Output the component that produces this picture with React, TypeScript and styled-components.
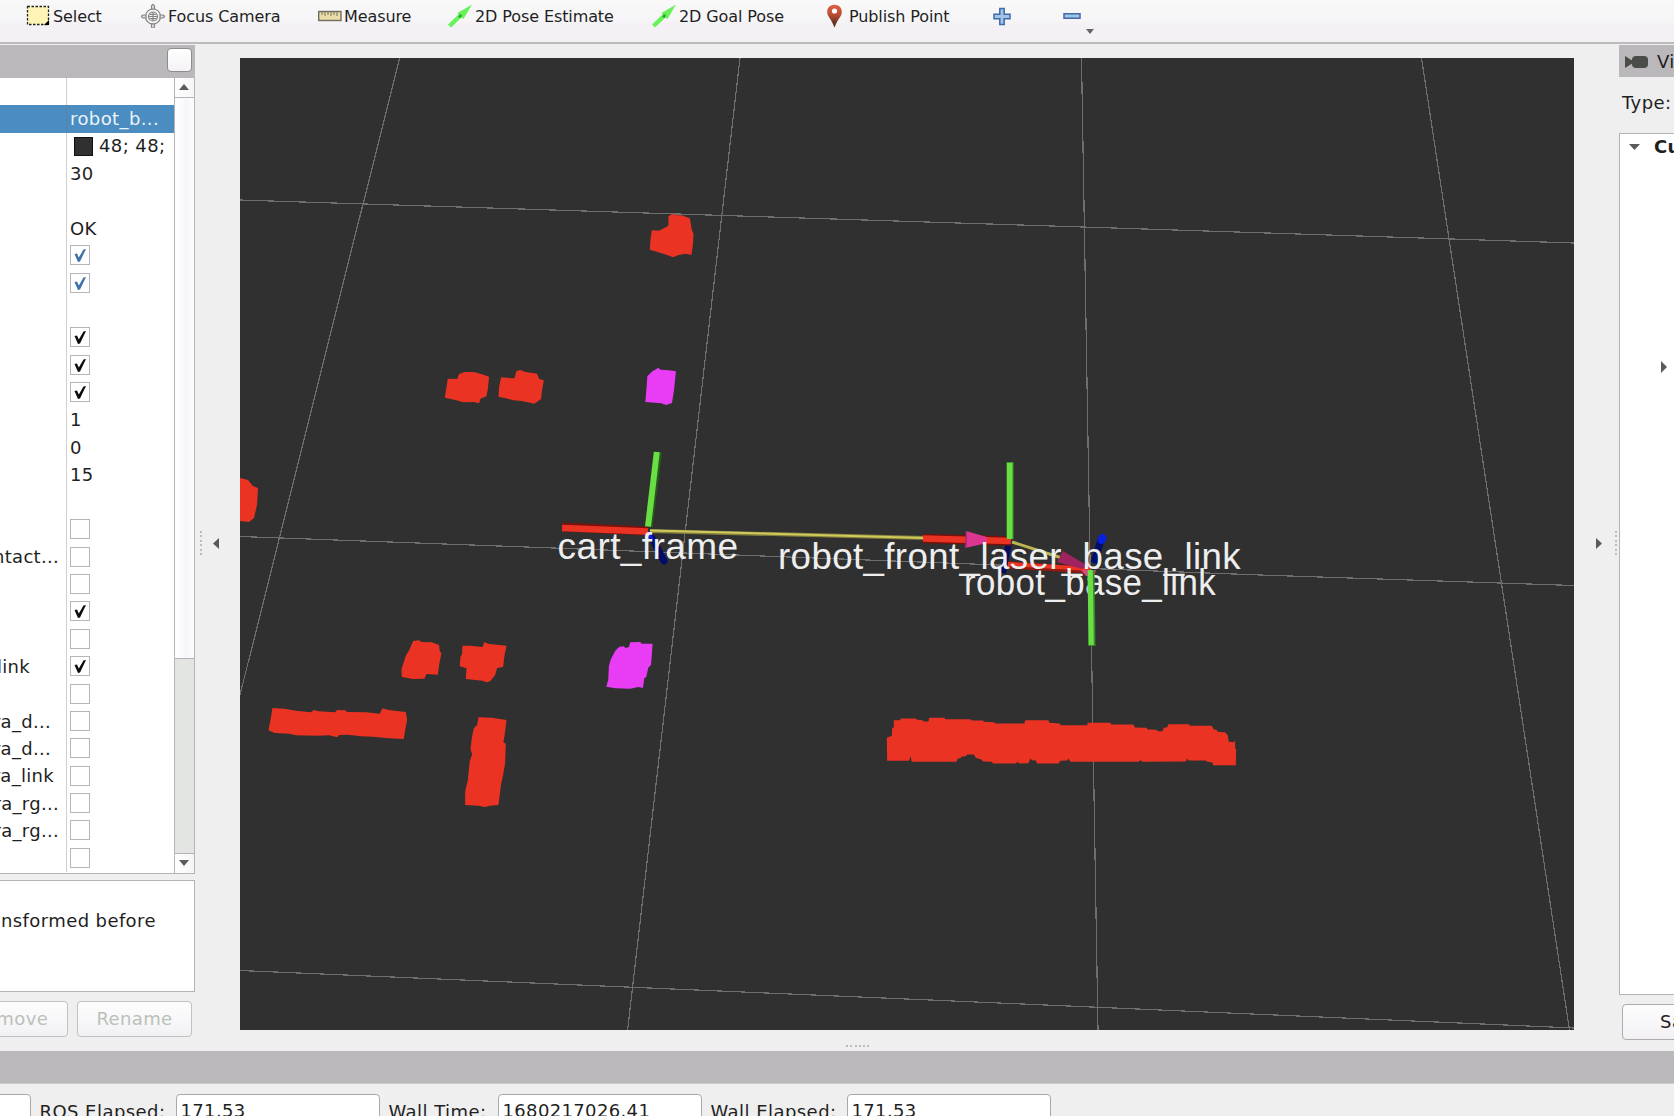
import React from "react";
import styled, { createGlobalStyle, css } from "styled-components";

const GlobalStyle = createGlobalStyle`
  * { box-sizing: border-box; }
  html, body { margin: 0; padding: 0; overflow: hidden; }
  body { background: #efefef; }
`;

const Window = styled.div`
  width: 1674px;
  height: 1116px;
  overflow: hidden;
  display: flex;
  flex-direction: column;
  background: #efefef;
  color: #1f1f1f;
  font-family: "DejaVu Sans", sans-serif;
  font-size: 18px;
  line-height: 22px;
  letter-spacing: 0.4px;
  white-space: nowrap;
`;

/* ---------- toolbar ---------- */

const Toolbar = styled.div`
  height: 44px;
  flex: none;
  display: flex;
  align-items: flex-start;
  background: linear-gradient(#f9f9f9, #f6f5f7 45%, #f3f1f4 60%, #f3f1f4);
  border-bottom: 2px solid #bcbabc;
  font-size: 16px;
  letter-spacing: -0.1px;
`;

const Tool = styled.div<{ $gap: number; $width: number }>`
  margin-left: ${(p) => p.$gap}px;
  width: ${(p) => p.$width}px;
  height: 32px;
  flex: none;
  display: flex;
  align-items: center;
`;

const ToolText = styled.span`
  padding-top: 2px;
`;

const ToolIcon = styled.svg<{ $space?: number }>`
  width: 24px;
  height: 24px;
  flex: none;
  margin-right: ${(p) => p.$space ?? 3}px;
`;

const MenuCaret = styled.svg`
  width: 8px;
  height: 5px;
  margin: 29px 0 0 4px;
`;

function PoseArrow() {
  return (
    <ToolIcon viewBox="0 0 24 24">
      <path d="M0 20.500 10.500 10.500 9.500 9 24 .5 15.500 15 13.500 13.500 3 23.500Z" fill="#67f258" />
      <path d="m10 13 2-3 2 1-1 3z" fill="#33a334" />
    </ToolIcon>
  );
}

/* ---------- docks ---------- */

const Main = styled.div`
  height: 1007px;
  flex: none;
  display: flex;
`;

const LeftDock = styled.div`
  width: 195px;
  flex: none;
  padding-top: 1px;
  display: flex;
  flex-direction: column;
`;

const DockTitle = styled.div<{ $right?: boolean }>`
  height: ${(p) => (p.$right ? 32 : 33)}px;
  flex: none;
  display: flex;
  align-items: center;
  justify-content: ${(p) => (p.$right ? "flex-start" : "flex-end")};
  padding: ${(p) => (p.$right ? "2px 0 0 6px" : "0 3px 3px 0")};
  background: #bbb8bb;
`;

const CameraIcon = styled.svg`
  width: 23px;
  height: 12px;
  flex: none;
  margin-right: 9px;
`;

const FloatButton = styled.div`
  width: 25px;
  height: 24px;
  border: 1px solid #8e8c8e;
  border-radius: 4px;
  background: linear-gradient(#fff, #f4f2f5);
`;

const Tree = styled.div`
  height: 796px;
  flex: none;
  display: flex;
  background: #fff;
  border-right: 1px solid #b5b3b5;
  border-bottom: 1px solid #b5b3b5;
`;

const Rows = styled.div`
  width: 174px;
  flex: none;
`;

const Row = styled.div<{ $selected?: boolean }>`
  height: 27.4px;
  display: flex;
  ${(p) =>
    p.$selected &&
    css`
      background: #4b8dc1;
      color: #eaf3fa;
    `}
`;

const NameCell = styled.div<{ $end: number }>`
  width: 67px;
  flex: none;
  display: flex;
  align-items: center;
  justify-content: flex-end;
  padding-right: ${(p) => p.$end}px;
  overflow: hidden;
  letter-spacing: 0.3px;
  border-right: 1px solid rgba(120, 116, 120, 0.34);
`;

const ValueCell = styled.div`
  flex: 1;
  display: flex;
  align-items: center;
  padding-left: 3px;
`;

const Swatch = styled.span`
  width: 19px;
  height: 19px;
  margin: 0 6px 0 4px;
  background: #303030;
  border: 1px solid #111;
`;

const Check = styled.span`
  width: 20px;
  height: 20px;
  margin-top: -1.5px;
  background: #fff;
  border: 1px solid #b7b5b7;
  display: flex;
`;

const ScrollBar = styled.div`
  width: 20px;
  flex: none;
  display: flex;
  flex-direction: column;
  border-left: 1px solid #b5b3b5;
  background: #e3e5e3;
`;

const ScrollStep = styled.div<{ $down?: boolean }>`
  height: 20px;
  display: flex;
  align-items: center;
  justify-content: center;
  padding: 0 1px 2px 0;
  background: linear-gradient(90deg, #fff, #f6f4f7);
  border-${(p) => (p.$down ? "top" : "bottom")}: 1px solid #b5b3b5;
`;

const Thumb = styled.div`
  height: 561px;
  margin-bottom: auto;
  background: linear-gradient(90deg, #fff, #f7f5f9 60%, #fdfdfd);
  border-bottom: 1px solid #b5b3b5;
`;

const Arrow = styled.svg<{ $w: number; $h: number }>`
  width: ${(p) => p.$w}px;
  height: ${(p) => p.$h}px;
  flex: none;
  fill: #5a5b58;
`;

const Help = styled.div`
  height: 112px;
  margin-top: 6px;
  flex: none;
  padding-top: 29px;
  padding-left: 1px;
  background: #fff;
  border: 1px solid #b5b3b5;
  border-left: 0;
`;

const Buttons = styled.div`
  display: flex;
  gap: 9px;
  margin: 9px 0 0 -47px;
`;

const Button = styled.div<{ $off?: boolean }>`
  width: 115px;
  height: 36px;
  flex: none;
  display: flex;
  align-items: center;
  justify-content: center;
  border: 1px solid ${(p) => (p.$off ? "#c2c0c2" : "#adabad")};
  border-radius: 4px;
  background: linear-gradient(#fdfdfd, #f8f7f9 50%, #f2f0f3);
  color: ${(p) => (p.$off ? "#b9c2b8" : "#1f1f1f")};
`;

const Splitter = styled.div<{ $right?: boolean }>`
  width: 45px;
  flex: none;
  height: 998px;
  display: flex;
  align-items: center;
  gap: ${(p) => (p.$right ? 13 : 11)}px;
  padding-left: ${(p) => (p.$right ? 22 : 5)}px;
`;

const Dots = styled.div<{ $flat?: boolean }>`
  display: flex;
  flex-direction: ${(p) => (p.$flat ? "row" : "column")};
  gap: ${(p) => (p.$flat ? 2.3 : 2.5)}px;
`;

const Dot = styled.i`
  width: 2px;
  height: 2px;
  background: #bcbcbc;
`;

const Center = styled.div`
  width: 1334px;
  flex: none;
  padding-top: 14px;
`;

const Scene = styled.svg`
  display: block;
  width: 1334px;
  height: 972px;
  background: #303030;
`;

const BottomHandle = styled.div`
  display: flex;
  padding: 15px 0 0 606px;
`;

const RightDock = styled.div`
  width: 55px;
  flex: none;
  overflow: hidden;
  padding-top: 1px;
`;

const TypeLine = styled.div`
  height: 56px;
  padding: 15px 0 0 3px;
`;

const ViewTree = styled.div`
  width: 300px;
  height: 862px;
  padding-left: 9px;
  background: #fff;
  border: 1px solid #b5b3b5;
`;

const ViewRow = styled.div`
  display: flex;
  align-items: center;
  gap: 14px;
  height: 25px;
  font-weight: bold;
`;

const ChildRow = styled.div`
  padding: 202px 0 0 32px;
  display: flex;
`;

const SaveButton = styled(Button)`
  width: 122px;
  margin: 9px 0 0 3px;
`;

/* ---------- time panel ---------- */

const TimeTitle = styled.div`
  height: 33px;
  flex: none;
  background: #bbb8bb;
  border-bottom: 1px solid #cfcdcf;
`;

const TimeRow = styled.div`
  display: flex;
  padding-top: 10px;
  margin-left: -173.5px;
`;

const Field = styled.div`
  width: 204px;
  height: 36px;
  flex: none;
  padding: 5px 0 0 4px;
  background: #fff;
  border: 1px solid #aaa8aa;
  border-radius: 4px;
  letter-spacing: 0.35px;
`;

const FieldLabel = styled.div<{ $width: number }>`
  width: ${(p) => p.$width}px;
  flex: none;
  padding: 7px 0 0 9px;
  letter-spacing: 0.45px;
`;

type Item = {
  name?: string;
  end?: number;
  text?: string;
  swatch?: boolean;
  box?: "off" | "on" | "blue";
  selected?: boolean;
};

const items: Item[] = [
  {},
  { text: "robot_b...", selected: true },
  { text: "48; 48;", swatch: true },
  { text: "30" },
  {},
  { text: "OK" },
  { box: "blue" },
  { box: "blue" },
  {},
  { box: "on" },
  { box: "on" },
  { box: "on" },
  { text: "1" },
  { text: "0" },
  { text: "15" },
  {},
  { box: "off" },
  { box: "off", name: "ntact...", end: 7 },
  { box: "off" },
  { box: "on" },
  { box: "off" },
  { box: "on", name: "link", end: 36 },
  { box: "off" },
  { box: "off", name: "ra_d...", end: 15 },
  { box: "off", name: "ra_d...", end: 15 },
  { box: "off", name: "ra_link", end: 12 },
  { box: "off", name: "ra_rg...", end: 7 },
  { box: "off", name: "ra_rg...", end: 7 },
  { box: "off" },
];

function CheckBox({ state }: { state: "off" | "on" | "blue" }) {
  return (
    <Check>
      {state !== "off" && (
        <svg width="18" height="18" viewBox="0 0 18 18">
          <path
            d="M3.500 8 6 7.500 7.800 11.500 12.500 3.500 15 3 9 15.500 7 16Z"
            fill={state === "blue" ? "#3d72a8" : "#0c0c0c"}
          />
        </svg>
      )}
    </Check>
  );
}

function Grip({ flat }: { flat?: boolean }) {
  return (
    <Dots $flat={flat}>
      {[0, 1, 2, 3, 4, 5].map((i) => (
        <Dot key={i} />
      ))}
    </Dots>
  );
}

function SceneView() {
  return (
    <Scene viewBox="240 58 1334 972">
      <g fill="none" stroke="#6e6e6e" strokeWidth="1.200" shapeRendering="crispEdges">
        <path d="M399.600 58 240 695M740 58 627.600 1030M1081.500 58 1098 1030M1421.500 58 1569.500 1030" />
        <path d="M240 200 1083 227 1574 243M240 536.500 540 547.500 1260 575 1574 585.500M240 970.500 930 1000 1574 1028" />
      </g>
      <g fill="#ea3323">
        <path d="M240 478 248 480 253 486 258 488 257 505 254 518 249 522 240 521Z" />
        <g transform="translate(429.800 199.700) scale(.33333)">
          <path d="M716 50 728 42 738 47 756 47 780 56 786 90 791 102 790 130 785 166 766 162 744 167 730 173 714 167 686 158 660 150 662 120 666 92 688 93 716 78Z" />
          <path d="M54 537 82 538 88 523 104 517 132 517 154 523 178 531 174 568 170 590 152 597 148 611 132 607 100 608 80 602 45 594 50 562Z" />
          <path d="M214 533 254 536 260 514 272 511 284 516 322 522 328 538 342 542 336 576 334 598 314 612 276 604 250 602 234 597 206 591 208 562Z" />
        </g>
        <g transform="translate(229.800 599.700) scale(.33333)">
          <path d="M550 124 568 122 575 127 606 128 628 136 630 155 635 160 628 196 624 225 590 223 584 237 550 238 516 232 515 208 523 185 528 168 538 152Z" />
          <path d="M698 138 722 138 758 142 764 127 774 132 830 138 824 168 820 202 802 205 796 226 782 244 770 248 758 243 708 238 710 206 690 200 692 172 697 162Z" />
          <path d="M128 325 165 327 198 333 244 338 252 331 266 335 316 338 322 331 346 332 352 337 410 338 450 342 458 326 476 331 528 337 532 360 526 392 522 418 476 416 430 411 394 410 354 405 328 406 322 413 298 407 264 408 198 407 178 402 134 400 116 392 122 362Z" />
          <path d="M746 353 786 354 830 361 826 396 821 428 828 432 826 490 820 526 814 552 806 616 780 618 766 622 746 618 706 616 706 576 714 542 720 484 727 464 722 448 726 416 732 386 742 376Z" />
        </g>
        <path
          transform="translate(869.800 689.800) scale(.33333)"
          d="M72 91 90 91 94 86 138 86 142 90 158 91 162 95 176 95 178 84 224 84 226 88 302 88 306 92 340 92 342 96 374 97 376 101 464 101 466 91 536 91 538 99 570 101 572 106 652 106 654 99 722 99 724 104 790 104 796 113 830 114 834 119 860 120 864 124 878 124 882 114 892 112 896 103 958 103 960 108 1026 108 1032 119 1040 120 1044 126 1066 127 1074 136 1077 156 1092 157 1096 151 1096 176 1099 178 1098 226 1030 226 1028 218 1012 216 1008 212 956 212 952 206 948 215 818 216 812 211 806 216 602 216 596 206 592 212 572 213 566 221 502 221 498 212 486 211 482 205 476 220 448 221 444 216 438 221 370 221 366 216 340 215 336 210 318 204 312 194 292 194 288 199 276 200 272 205 264 206 260 216 126 216 122 199 118 213 52 213 51 144 66 138 67 115 72 112Z"
        />
      </g>
      <g fill="#e83df4">
        <path
          transform="translate(430 199.700) scale(.33333)"
          d="M668 514 678 509 684 504 692 510 716 512 738 515 732 572 726 610 708 616 694 611 646 607 650 560 652 530Z"
        />
        <path
          transform="translate(229.600 599.700) scale(.33333)"
          d="M1158 152 1170 141 1182 140 1188 145 1198 142 1202 128 1232 127 1236 132 1269 132 1266 175 1264 196 1256 204 1250 232 1244 236 1240 265 1226 262 1202 267 1158 266 1130 261 1136 240 1138 198 1144 178Z"
        />
      </g>
      <g strokeLinecap="butt" fill="none">
        <path d="M652 538 664 561" stroke="#000c69" strokeWidth="7" strokeLinecap="round" />
        <path d="M648 532 652 540" stroke="#0720dc" strokeWidth="4" />
        <path d="M562 527 648 531" stroke="#7b130c" strokeWidth="9" />
        <path d="M562 528 648 531.500" stroke="#ea3323" strokeWidth="6.500" />
        <path d="M650 531 925 538" stroke="#85813d" strokeWidth="4" />
        <path d="M650 530.500 925 538" stroke="#d0c95b" strokeWidth="2" />
        <path d="M649 527 658.500 452" stroke="#245d18" strokeWidth="7" />
        <path d="M648 526.500 656.800 452" stroke="#68df43" strokeWidth="6" />
        <path d="M1009 542 1003 573" stroke="#000d68" strokeWidth="6" />
        <path d="M1012 542 1068 560" stroke="#bbb64f" strokeWidth="3" />
        <path d="M923 538.500 1011 541" stroke="#73110c" strokeWidth="9.500" />
        <path d="M923 538.500 1011 541" stroke="#ea3323" strokeWidth="6.500" />
        <path d="M1008 565 1090 570" stroke="#93190f" strokeWidth="7" />
        <path d="M1008 564 1090 569" stroke="#ea3323" strokeWidth="4" />
        <path d="M1010 539 1010 462" stroke="#3b952b" strokeWidth="7" />
        <path d="M1009.700 539 1009.700 463" stroke="#68df43" strokeWidth="5.500" />
        <path d="M1094 563 1101 540" stroke="#000d69" strokeWidth="7" />
        <path d="M1101.500 540 1102.500 538" stroke="#0820dc" strokeWidth="8" strokeLinecap="round" />
      </g>
      <path d="M966 531 987 537 987 543 965 548Z" fill="#dc3690" />
      <path d="M966 531 966 548" stroke="#891f59" />
      <path d="M1063 551 1088 566 1082 569 1057 562Z" fill="#9e235f" />
      <path d="M1081 570 1096 570 1094 577 1086 576Z" fill="#e5418b" />
      <g fill="#eeeeee" fontFamily="'Liberation Sans', Arial, sans-serif" fontSize="36">
        <text x="557.500" y="559" textLength="181" lengthAdjust="spacingAndGlyphs">cart_frame</text>
        <text x="778" y="569" textLength="463" lengthAdjust="spacingAndGlyphs">robot_front_laser_base_link</text>
        <text x="964" y="595" textLength="252" lengthAdjust="spacingAndGlyphs">robot_base_link</text>
      </g>
      <path d="M1091 570 1092 646" stroke="#38882a" strokeWidth="7" />
      <path d="M1090.200 570 1091.200 645" stroke="#68df43" strokeWidth="5.200" />
    </Scene>
  );
}

export default function App() {
  return (
    <Window>
      <GlobalStyle />
      <Toolbar>
        <Tool $gap={26} $width={115}>
          <ToolIcon viewBox="0 0 24 24">
            <rect x="1.500" y="2.500" width="21" height="18" fill="#fff3b6" stroke="#222" strokeWidth="1.300" strokeDasharray="2.500 1.500" />
            <path d="M23 16v5h-5z" fill="#000" />
          </ToolIcon>
          <ToolText>Select</ToolText>
        </Tool>
        <Tool $gap={0} $width={177}>
          <ToolIcon viewBox="0 0 24 24">
            <g fill="none" stroke="#868686" strokeWidth="1.200">
              <circle cx="12" cy="12.500" r="7.500" />
              <circle cx="12" cy="12.500" r="4.500" />
              <path d="M7.500 12.500h9M12 8v9M8.500 10.300h7M8.500 14.700h7" />
              <path fill="#ddd" d="m12 0 1.500 2v3h-3V2zM12 25l1.500-2v-3h-3v3zM0 12.500 2 11h3v3H2zM24 12.500 22 11h-3v3h3z" />
            </g>
          </ToolIcon>
          <ToolText>Focus Camera</ToolText>
        </Tool>
        <Tool $gap={0} $width={130}>
          <ToolIcon viewBox="0 0 24 24" $space={2}>
            <rect x=".7" y="7.500" width="22.300" height="9" fill="#eadca7" stroke="#716c62" strokeWidth="1.400" />
            <path d="M4 8v3M7 8v4M10 8v3M13 8v4M16 8v3M19 8v4" stroke="#77705d" />
          </ToolIcon>
          <ToolText>Measure</ToolText>
        </Tool>
        <Tool $gap={0} $width={204}>
          <PoseArrow />
          <ToolText>2D Pose Estimate</ToolText>
        </Tool>
        <Tool $gap={0} $width={174}>
          <PoseArrow />
          <ToolText>2D Goal Pose</ToolText>
        </Tool>
        <Tool $gap={-4} $width={168}>
          <ToolIcon viewBox="0 0 24 24">
            <defs>
              <linearGradient id="pin" x2="0" y2="1">
                <stop stopColor="#df6046" />
                <stop offset=".45" stopColor="#b74d33" />
                <stop offset="1" stopColor="#3e2419" />
              </linearGradient>
            </defs>
            <path d="M12.500.7c-4.500 0-7.300 3-7.300 7.200 0 4.600 4.300 7 7.300 15.600 3-8.600 7.300-11 7.300-15.600C19.800 3.700 17 .7 12.500.7z" fill="url(#pin)" />
            <circle cx="12.500" cy="7" r="2.600" fill="#fff" />
          </ToolIcon>
          <ToolText>Publish Point</ToolText>
        </Tool>
        <Tool $gap={0} $width={70}>
          <ToolIcon viewBox="0 0 24 24">
            <path d="M9.800 4.500h4.400v5.800H20v4.400h-5.800v5.800H9.800v-5.800H4v-4.400h5.800z" fill="#a3c3e7" stroke="#3f6ba8" strokeWidth="1.500" />
          </ToolIcon>
        </Tool>
        <Tool $gap={0} $width={22}>
          <ToolIcon viewBox="0 0 24 24">
            <path d="M4 9.800h16v4.400H4z" fill="#a3c3e7" stroke="#3f6ba8" strokeWidth="1.500" />
          </ToolIcon>
        </Tool>
        <MenuCaret viewBox="0 0 8 5">
          <path d="M0 0h8L4 5z" fill="#666" />
        </MenuCaret>
      </Toolbar>

      <Main>
        <LeftDock>
          <DockTitle>
            <FloatButton />
          </DockTitle>
          <Tree>
            <Rows>
              {items.map((it, i) => (
                <Row key={i} $selected={it.selected}>
                  <NameCell $end={it.end ?? 0}>{it.name}</NameCell>
                  <ValueCell>
                    {it.swatch && <Swatch />}
                    {it.box && <CheckBox state={it.box} />}
                    {it.text}
                  </ValueCell>
                </Row>
              ))}
            </Rows>
            <ScrollBar>
              <ScrollStep>
                <Arrow $w={10} $h={6} viewBox="0 0 10 6">
                  <path d="M0 6h10L5 0z" />
                </Arrow>
              </ScrollStep>
              <Thumb />
              <ScrollStep $down>
                <Arrow $w={10} $h={6} viewBox="0 0 10 6">
                  <path d="M0 0h10L5 6z" />
                </Arrow>
              </ScrollStep>
            </ScrollBar>
          </Tree>
          <Help>nsformed before</Help>
          <Buttons>
            <Button $off>Remove</Button>
            <Button $off>Rename</Button>
          </Buttons>
        </LeftDock>

        <Splitter>
          <Grip />
          <Arrow $w={6} $h={11} viewBox="0 0 6 11">
            <path d="M6 0v11L0 5.500z" />
          </Arrow>
        </Splitter>

        <Center>
          <SceneView />
          <BottomHandle>
            <Grip flat />
          </BottomHandle>
        </Center>

        <Splitter $right>
          <Arrow $w={6} $h={11} viewBox="0 0 6 11">
            <path d="M0 0v11l6-5.500z" />
          </Arrow>
          <Grip />
        </Splitter>

        <RightDock>
          <DockTitle $right>
            <CameraIcon viewBox="0 0 23 12">
              <path d="M0 0 8 5v2L0 12z" fill="#4a4d48" />
              <rect x="7" y="0" width="16" height="12" rx="4" fill="#4a4d48" />
            </CameraIcon>
            Views
          </DockTitle>
          <TypeLine>Type:</TypeLine>
          <ViewTree>
            <ViewRow>
              <Arrow $w={11} $h={6} viewBox="0 0 11 6">
                <path d="M0 0h11L5.500 6z" />
              </Arrow>
              Current View
            </ViewRow>
            <ChildRow>
              <Arrow $w={6} $h={12} viewBox="0 0 6 12">
                <path d="M0 0v12l6-6z" />
              </Arrow>
            </ChildRow>
          </ViewTree>
          <SaveButton>Save</SaveButton>
        </RightDock>
      </Main>

      <TimeTitle />
      <TimeRow>
        <Field />
        <FieldLabel $width={145}>ROS Elapsed:</FieldLabel>
        <Field>171.53</Field>
        <FieldLabel $width={118}>Wall Time:</FieldLabel>
        <Field>1680217026.41</Field>
        <FieldLabel $width={145}>Wall Elapsed:</FieldLabel>
        <Field>171.53</Field>
      </TimeRow>
    </Window>
  );
}
